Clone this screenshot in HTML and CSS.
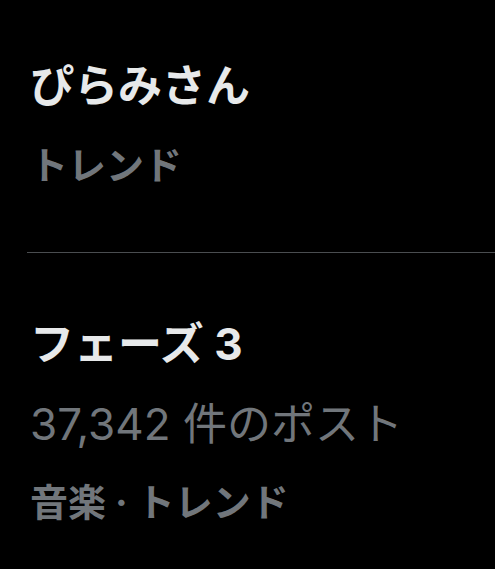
FILE: index.html
```html
<!DOCTYPE html>
<html lang="ja">
<head>
  <meta charset="utf-8">
  <title>トレンド</title>
  <link rel="stylesheet" href="styles.css">
</head>
<body>
  <div class="trend">
    <div class="trend-title">ぴらみさん</div>
    <div class="trend-meta">トレンド</div>
  </div>

  <div class="trend">
    <div class="trend-title">フェーズ 3</div>
    <div class="trend-count">37,342 件のポスト</div>
    <div class="trend-meta">音楽 · トレンド</div>
  </div>
</body>
</html>
```

FILE: styles.css
```css
body {
  background: #000;
  margin: 0;
  padding: 0;
  font-family: Inter, "Noto Sans CJK JP", sans-serif;
  overflow: hidden;
}

.trend {
  padding: 58px 0 59px 30px;
}

.trend + .trend {
  border-top: 1px solid #4a4d50;
  margin-left: 27px;
  padding-left: 3px;
  padding-top: 63px;
}

.trend-title {
  color: #e7e9ea;
  font-size: 44px;
  font-weight: bold;
  line-height: 56px;
}

.trend-meta {
  color: #71767b;
  font-size: 38px;
  font-weight: bold;
  line-height: 56px;
  margin-top: 23px;
}

.trend-count {
  color: #71767b;
  font-size: 44px;
  line-height: 56px;
  margin-top: 24px;
}

.trend-count + .trend-meta {
  margin-top: 22px;
}
```
